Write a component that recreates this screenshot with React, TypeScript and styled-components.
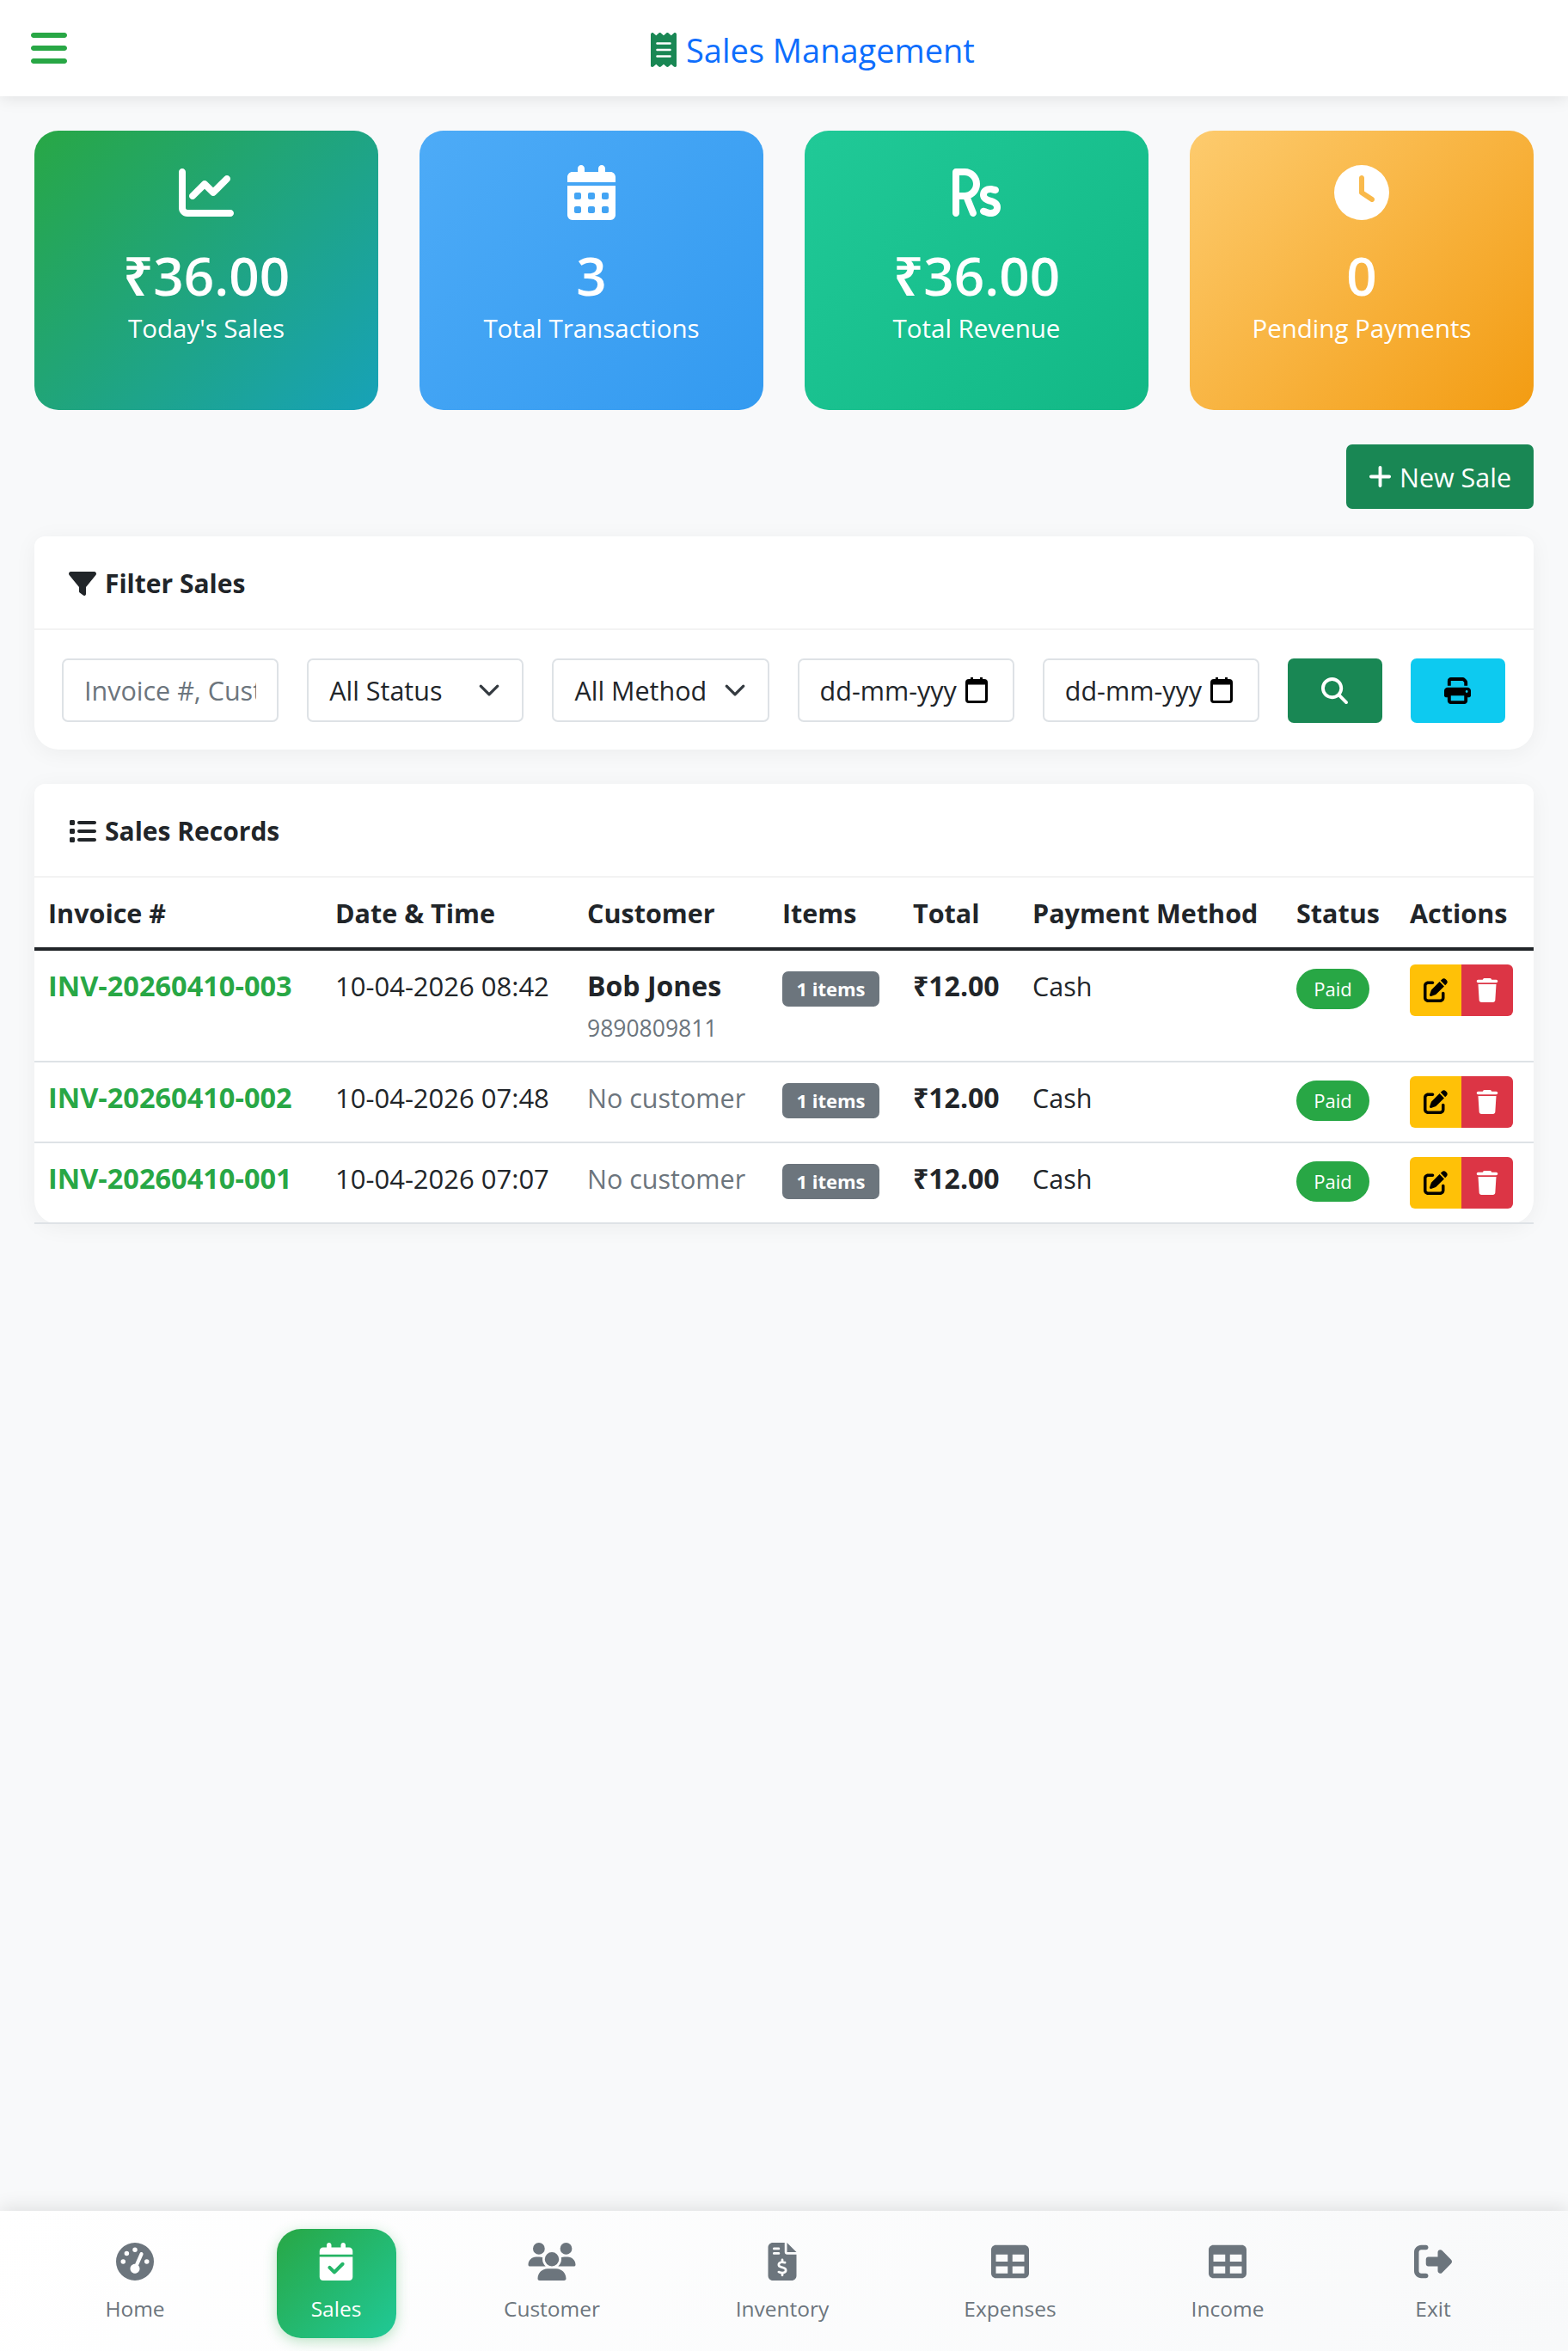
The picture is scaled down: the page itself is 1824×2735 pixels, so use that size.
import React from "react";
import styled, { createGlobalStyle } from "styled-components";
import {
  FaBars,
  FaReceipt,
  FaChartLine,
  FaCalendarDays,
  FaRupeeSign,
  FaClock,
  FaPlus,
  FaFilter,
  FaList,
  FaMagnifyingGlass,
  FaPrint,
  FaPenToSquare,
  FaTrash,
  FaGaugeHigh,
  FaCalendarCheck,
  FaUsers,
  FaFileInvoiceDollar,
  FaTable,
  FaRightFromBracket,
} from "react-icons/fa6";

const GlobalStyle = createGlobalStyle`
  * { box-sizing: border-box; }
  body {
    margin: 0;
    background: #f8f9fa;
    color: #212529;
    font-family: "Open Sans", "Noto Sans", sans-serif;
    font-size: 30.5px;
  }
`;

const Page = styled.div`
  min-height: 100vh;
  display: flex;
  flex-direction: column;
`;

const TopBar = styled.header`
  height: 112px;
  padding-left: 36px;
  display: flex;
  align-items: center;
  background: #fff;
  box-shadow: 0 2px 18px rgba(0, 0, 0, 0.1);
`;

const MenuButton = styled.span`
  display: flex;
  color: #28a745;
  svg {
    height: 48px;
    width: 42px;
  }
`;

const Title = styled.h1`
  margin: 3px 0 0 679px;
  display: flex;
  align-items: center;
  gap: 11px;
  color: #0d6efd;
  font-size: 38px;
  font-weight: 400;
  svg {
    height: 40px;
    width: 30px;
    color: #198754;
  }
`;

const Main = styled.main`
  flex: 1;
  padding: 40px 40px 0;
`;

const StatGrid = styled.section`
  display: grid;
  grid-template-columns: repeat(4, 1fr);
  gap: 48px;
`;

const StatCard = styled.div<{ $from: string; $to: string }>`
  height: 325px;
  padding-top: 40px;
  display: flex;
  flex-direction: column;
  align-items: center;
  border-radius: 28px;
  color: #fff;
  background: linear-gradient(135deg, ${(p) => p.$from}, ${(p) => p.$to});
  svg {
    height: 64px;
    width: 64px;
  }
`;

const StatValue = styled.div`
  margin-top: 26px;
  font-size: 62px;
  font-weight: 600;
  line-height: 76px;
`;

const StatLabel = styled.div`
  margin-top: 1px;
  font-size: 29.5px;
  line-height: 46px;
`;

const ActionRow = styled.div`
  margin: 40px 0 32px;
  display: flex;
  justify-content: flex-end;
`;

const NewSaleButton = styled.button`
  width: 218px;
  height: 75px;
  display: flex;
  align-items: center;
  justify-content: center;
  gap: 9px;
  border: 0;
  border-radius: 7px;
  background: #198754;
  color: #fff;
  font: inherit;
  svg {
    height: 31px;
    width: 27px;
  }
`;

const Panel = styled.section`
  margin-bottom: 40px;
  background: #fff;
  border-radius: 12px 12px 28px 28px;
  box-shadow: 0 4px 26px rgba(0, 0, 0, 0.05);
`;

const PanelHeader = styled.div`
  height: 109px;
  padding: 2px 0 0 40px;
  display: flex;
  align-items: center;
  gap: 10px;
  border-bottom: 2px solid #f3f3f3;
  font-size: 30px;
  font-weight: 700;
  svg {
    height: 32px;
    width: 32px;
  }
`;

const FilterGrid = styled.div`
  padding: 33px 33px 31px 32px;
  display: grid;
  grid-template-columns: repeat(5, minmax(0, 1fr)) 110px 110px;
  gap: 33px;
`;

const TextInput = styled.input`
  width: 100%;
  min-width: 0;
  height: 74px;
  padding: 0 24px;
  border: 2px solid #dee2e6;
  border-radius: 7px;
  background: #fff;
  color: #212529;
  font: inherit;
  &::placeholder {
    color: #6c757d;
    opacity: 1;
  }
`;

const Field = styled.div`
  height: 74px;
  padding: 0 25px 0 24px;
  display: flex;
  align-items: center;
  justify-content: space-between;
  border: 2px solid #dee2e6;
  border-radius: 7px;
  background: #fff;
`;

const DateField = styled(Field)`
  padding-right: 29px;
  gap: 8px;
`;

const DateText = styled.span`
  white-space: nowrap;
`;

const SquareButton = styled.button<{ $bg: string; $fg: string }>`
  height: 75px;
  display: flex;
  align-items: center;
  justify-content: center;
  border: 0;
  border-radius: 7px;
  background: ${(p) => p.$bg};
  color: ${(p) => p.$fg};
  svg {
    height: 31px;
    width: 31px;
  }
`;

const Table = styled.table`
  width: 100%;
  table-layout: fixed;
  border-collapse: collapse;
`;

const Th = styled.th`
  height: 83px;
  padding: 0 16px;
  border-bottom: 4px solid #212529;
  font-weight: 700;
  text-align: left;
  white-space: nowrap;
`;

const Td = styled.td`
  padding: 16px;
  border-bottom: 2px solid #dee2e6;
  line-height: 50px;
  vertical-align: top;
  white-space: nowrap;
`;

const DateCell = styled(Td)`
  font-size: 31px;
`;

const InvoiceLink = styled.span`
  color: #28a745;
  font-size: 32.5px;
  font-weight: 700;
`;

const CustomerName = styled.div`
  font-size: 32px;
  font-weight: 700;
`;

const Muted = styled.span`
  color: #6c757d;
`;

const Phone = styled.div`
  margin: 6px 0 4px;
  color: #6c757d;
  font-size: 26.5px;
  line-height: 36px;
`;

const ItemsBadge = styled.span`
  display: inline-block;
  width: 113px;
  margin-top: 5px;
  border-radius: 7px;
  background: #6c757d;
  color: #fff;
  font-size: 22px;
  font-weight: 700;
  line-height: 41px;
  text-align: center;
`;

const Total = styled.span`
  font-size: 32px;
  font-weight: 700;
`;

const StatusPill = styled.span`
  display: inline-block;
  width: 85px;
  margin-top: 2px;
  border-radius: 24px;
  background: #28a745;
  color: #fff;
  font-size: 22px;
  line-height: 47px;
  text-align: center;
`;

const ActionGroup = styled.div`
  display: flex;
  width: 120px;
  height: 60px;
`;

const ActionButton = styled.button<{ $bg: string; $fg: string; $side: "left" | "right" }>`
  flex: 1;
  padding: 0;
  display: flex;
  align-items: center;
  justify-content: center;
  border: 0;
  border-radius: ${(p) => (p.$side === "left" ? "6px 0 0 6px" : "0 6px 6px 0")};
  background: ${(p) => p.$bg};
  color: ${(p) => p.$fg};
  svg {
    height: 28px;
    width: 28px;
  }
`;

const BottomNav = styled.nav`
  height: 163px;
  padding-top: 21px;
  display: grid;
  grid-template-columns: 314px 154px 348px 188px 342px 164px 314px;
  background: linear-gradient(135deg, #fff, #f8f9fa);
  box-shadow: 0 -4px 20px rgba(0, 0, 0, 0.1);
`;

const NavCell = styled.div`
  display: flex;
  justify-content: center;
`;

const NavItem = styled.a<{ $active?: boolean }>`
  width: ${(p) => (p.$active ? "139px" : "auto")};
  height: 127px;
  padding-top: 16px;
  display: flex;
  flex-direction: column;
  align-items: center;
  gap: 15px;
  border-radius: 28px;
  font-size: 24.5px;
  line-height: 36px;
  color: ${(p) => (p.$active ? "#fff" : "#6c757d")};
  background: ${(p) => (p.$active ? "linear-gradient(135deg, #28a745, #20c997)" : "transparent")};
  box-shadow: ${(p) => (p.$active ? "0 4px 15px rgba(40, 167, 69, 0.3)" : "none")};
  svg {
    height: 44px;
    width: 56px;
  }
`;

const CalendarGlyph = () => (
  <svg width="26" height="30" viewBox="0 0 26 30" style={{ flex: "none" }}>
    <path d="M6 0h3v4H6zM17 0h3v4h-3z" fill="#000" />
    <rect x="1.5" y="3.5" width="23" height="25" rx="2.5" fill="none" stroke="#000" strokeWidth="3" />
    <rect x="1.5" y="3.5" width="23" height="5" fill="#000" />
  </svg>
);

const Chevron = () => (
  <svg width="26" height="26" viewBox="0 0 16 16" fill="none" style={{ flex: "none" }}>
    <path d="m2 5 6 6 6-6" stroke="#343a40" strokeWidth="2" strokeLinecap="round" strokeLinejoin="round" />
  </svg>
);

const stats = [
  { icon: <FaChartLine />, value: "₹36.00", label: "Today's Sales", from: "#28a745", to: "#17a2b8" },
  { icon: <FaCalendarDays />, value: "3", label: "Total Transactions", from: "#4dabf7", to: "#339af0" },
  { icon: <FaRupeeSign />, value: "₹36.00", label: "Total Revenue", from: "#20c997", to: "#12b886" },
  { icon: <FaClock />, value: "0", label: "Pending Payments", from: "#fdcb6e", to: "#f39c12" },
];

const columns = [
  ["Invoice #", 334],
  ["Date & Time", 293],
  ["Customer", 227],
  ["Items", 152],
  ["Total", 139],
  ["Payment Method", 307],
  ["Status", 132],
  ["Actions", 160],
] as const;

const sales = [
  { invoice: "INV-20260410-003", date: "10-04-2026 08:42", customer: "Bob Jones", phone: "9890809811" },
  { invoice: "INV-20260410-002", date: "10-04-2026 07:48" },
  { invoice: "INV-20260410-001", date: "10-04-2026 07:07" },
];

const navItems = [
  { icon: <FaGaugeHigh />, label: "Home" },
  { icon: <FaCalendarCheck />, label: "Sales", active: true },
  { icon: <FaUsers />, label: "Customer" },
  { icon: <FaFileInvoiceDollar />, label: "Inventory" },
  { icon: <FaTable />, label: "Expenses" },
  { icon: <FaTable />, label: "Income" },
  { icon: <FaRightFromBracket />, label: "Exit" },
];

const App: React.FC = () => {
  return (
    <Page>
      <GlobalStyle />
      <TopBar>
        <MenuButton>
          <FaBars />
        </MenuButton>
        <Title>
          <FaReceipt />
          Sales Management
        </Title>
      </TopBar>

      <Main>
        <StatGrid>
          {stats.map((s) => (
            <StatCard key={s.label} $from={s.from} $to={s.to}>
              {s.icon}
              <StatValue>{s.value}</StatValue>
              <StatLabel>{s.label}</StatLabel>
            </StatCard>
          ))}
        </StatGrid>

        <ActionRow>
          <NewSaleButton>
            <FaPlus />
            New Sale
          </NewSaleButton>
        </ActionRow>

        <Panel>
          <PanelHeader>
            <FaFilter />
            Filter Sales
          </PanelHeader>
          <FilterGrid>
            <TextInput placeholder="Invoice #, Customer..." />
            <Field>
              All Status
              <Chevron />
            </Field>
            <Field>
              All Method
              <Chevron />
            </Field>
            <DateField>
              <DateText>dd-mm-yyy</DateText>
              <CalendarGlyph />
            </DateField>
            <DateField>
              <DateText>dd-mm-yyy</DateText>
              <CalendarGlyph />
            </DateField>
            <SquareButton $bg="#198754" $fg="#fff">
              <FaMagnifyingGlass />
            </SquareButton>
            <SquareButton $bg="#0dcaf0" $fg="#000">
              <FaPrint />
            </SquareButton>
          </FilterGrid>
        </Panel>

        <Panel>
          <PanelHeader>
            <FaList />
            Sales Records
          </PanelHeader>
          <Table>
            <colgroup>
              {columns.map(([name, width]) => (
                <col key={name} width={width} />
              ))}
            </colgroup>
            <thead>
              <tr>
                {columns.map(([name]) => (
                  <Th key={name}>{name}</Th>
                ))}
              </tr>
            </thead>
            <tbody>
              {sales.map((sale) => (
                <tr key={sale.invoice}>
                  <Td>
                    <InvoiceLink>{sale.invoice}</InvoiceLink>
                  </Td>
                  <DateCell>{sale.date}</DateCell>
                  <Td>
                    {sale.customer ? (
                      <>
                        <CustomerName>{sale.customer}</CustomerName>
                        <Phone>{sale.phone}</Phone>
                      </>
                    ) : (
                      <Muted>No customer</Muted>
                    )}
                  </Td>
                  <Td>
                    <ItemsBadge>1 items</ItemsBadge>
                  </Td>
                  <Td>
                    <Total>₹12.00</Total>
                  </Td>
                  <Td>Cash</Td>
                  <Td>
                    <StatusPill>Paid</StatusPill>
                  </Td>
                  <Td>
                    <ActionGroup>
                      <ActionButton $bg="#ffc107" $fg="#000" $side="left">
                        <FaPenToSquare />
                      </ActionButton>
                      <ActionButton $bg="#dc3545" $fg="#fff" $side="right">
                        <FaTrash />
                      </ActionButton>
                    </ActionGroup>
                  </Td>
                </tr>
              ))}
            </tbody>
          </Table>
        </Panel>
      </Main>

      <BottomNav>
        {navItems.map((item) => (
          <NavCell key={item.label}>
            <NavItem $active={item.active}>
              {item.icon}
              {item.label}
            </NavItem>
          </NavCell>
        ))}
      </BottomNav>
    </Page>
  );
};

export default App;
